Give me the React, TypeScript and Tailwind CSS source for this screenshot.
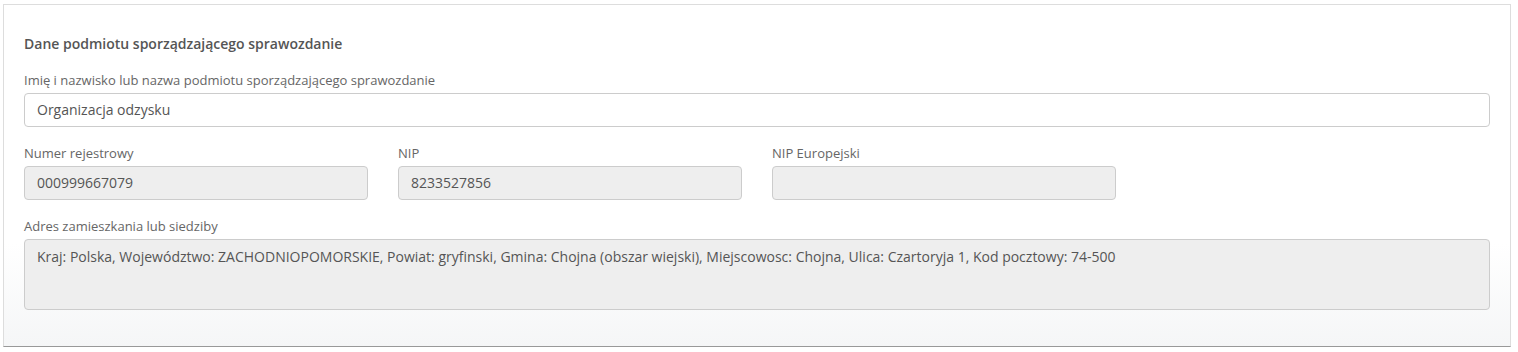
import React from 'react';

const Field: React.FC<{ label: string; value?: string; disabled?: boolean; tall?: boolean }> = ({
  label,
  value,
  disabled,
  tall
}) => (
  <div>
    <label className="block text-[13px] leading-[18px] text-[#666] mb-[4px]">{label}</label>
    <div
      className={`w-full rounded-[4px] border border-[#ccc] px-[12px] text-[14px] text-[#555] ${
        disabled ? 'bg-[#eee]' : 'bg-white'
      } ${tall ? 'h-[71px] pt-[7px] leading-[20px]' : 'h-[34px] leading-[32px]'}`}
    >
      {value}
    </div>
  </div>
);

export default function App() {
  return (
    <div className="bg-white font-['Open_Sans',sans-serif] pt-[4px] pl-[3px] pr-[7px] h-[352px]">
      <div className="border border-[#ddd] border-b-[#999] bg-gradient-to-b from-white from-70% to-[#f5f6f7] px-[20px] pt-[29px] h-[343px]">
        <h4 className="text-[14px] font-semibold text-[#555] leading-[20px] mb-[17px]">
          Dane podmiotu sporządzającego sprawozdanie
        </h4>
        <Field label="Imię i nazwisko lub nazwa podmiotu sporządzającego sprawozdanie" value="Organizacja odzysku" />
        <div className="grid grid-cols-4 gap-x-[30px] mt-[17px]">
          <Field label="Numer rejestrowy" value="000999667079" disabled />
          <Field label="NIP" value="8233527856" disabled />
          <Field label="NIP Europejski" value="" disabled />
        </div>
        <div className="mt-[17px]">
          <Field
            label="Adres zamieszkania lub siedziby"
            value="Kraj: Polska, Województwo: ZACHODNIOPOMORSKIE, Powiat: gryfinski, Gmina: Chojna (obszar wiejski), Miejscowosc: Chojna, Ulica: Czartoryja 1, Kod pocztowy: 74-500"
            disabled
            tall
          />
        </div>
      </div>
    </div>
  );
}
